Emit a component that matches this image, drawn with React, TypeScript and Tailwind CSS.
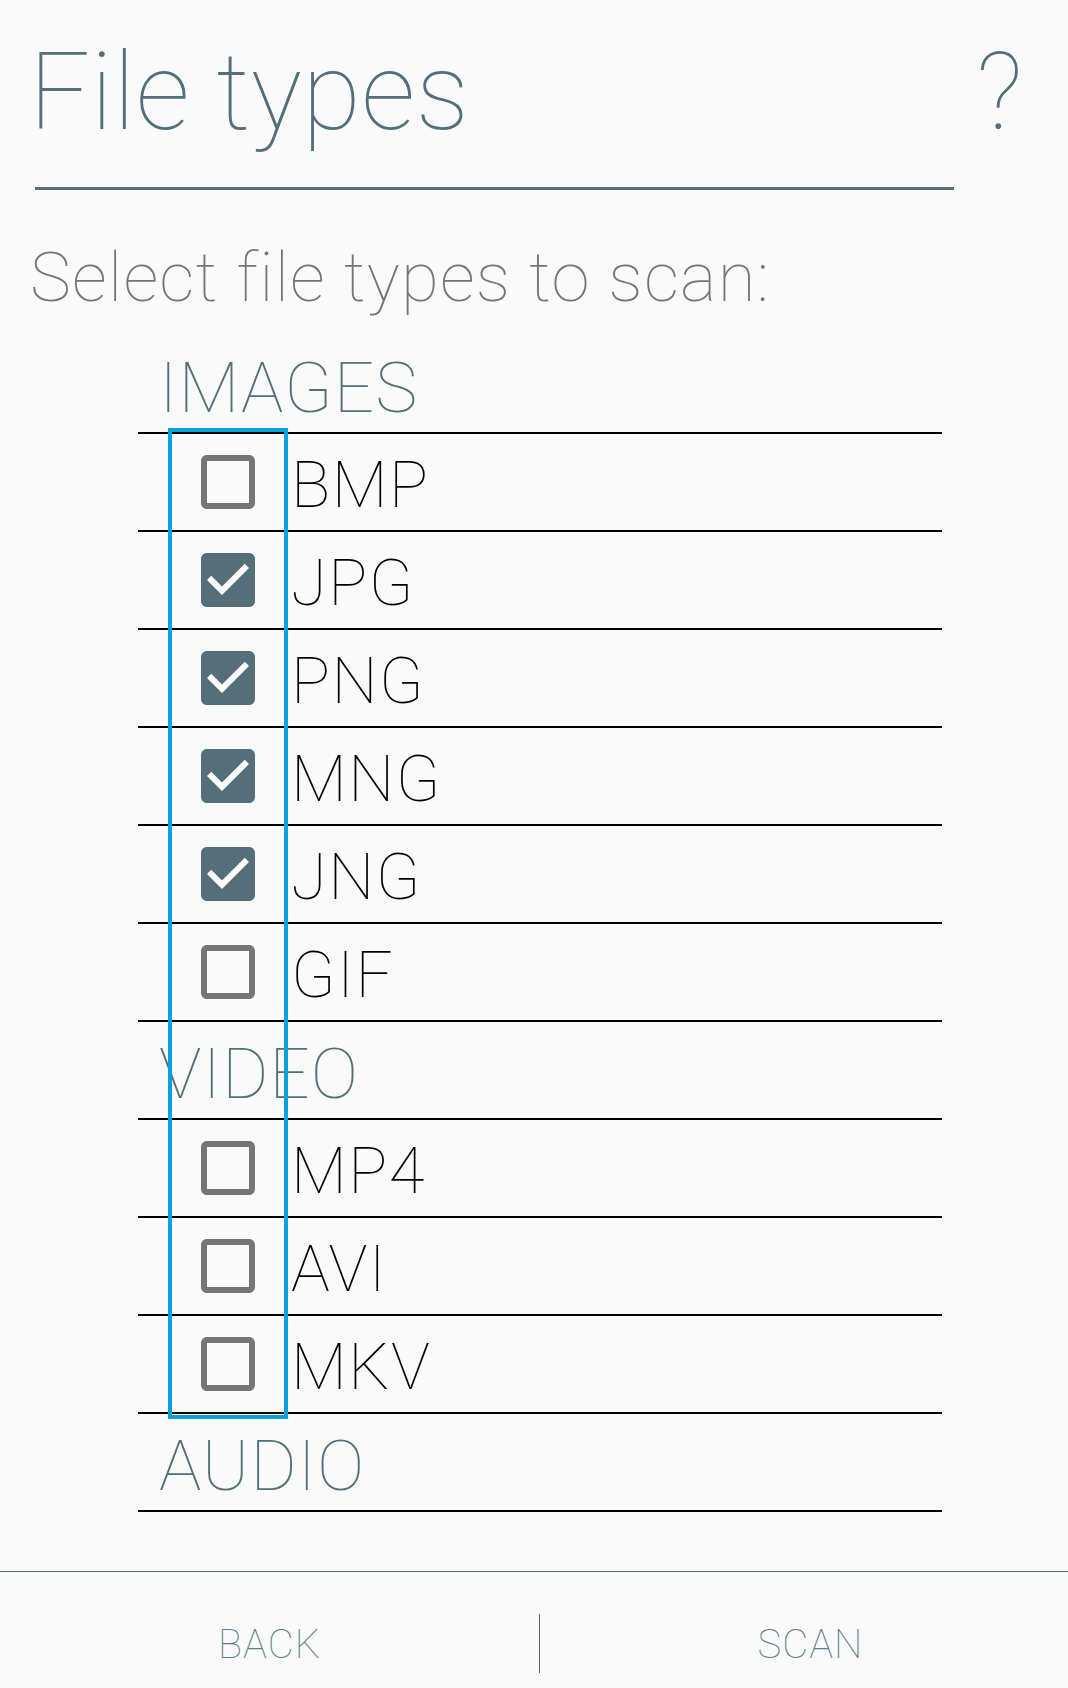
import React from "react";

const font = { fontFamily: "Roboto, 'Noto Sans', sans-serif" };

function Box({ checked }: { checked: boolean }) {
  if (checked) {
    return (
      <svg width="54" height="54" viewBox="3 3 18 18" className="shrink-0">
        <path
          fill="#546e7a"
          d="M19 3H5c-1.11 0-2 .9-2 2v14c0 1.1.89 2 2 2h14c1.11 0 2-.9 2-2V5c0-1.1-.89-2-2-2z"
        />
        <path fill="#ffffff" d="M10 17l-5-5 1.41-1.41L10 14.17l7.59-7.59L19 8l-9 9z" />
      </svg>
    );
  }
  return (
    <svg width="54" height="54" viewBox="3 3 18 18" className="shrink-0">
      <path
        fill="#757575"
        d="M19 5v14H5V5h14m0-2H5c-1.1 0-2 .9-2 2v14c0 1.1.9 2 2 2h14c1.1 0 2-.9 2-2V5c0-1.1-.9-2-2-2z"
      />
    </svg>
  );
}

function Header({ label }: { label: string }) {
  return (
    <div className="flex h-[98px] items-center border-b-2 border-black pl-[21px]">
      <span className="mt-[6px] text-[71px] font-thin leading-none tracking-[1px] text-[#546e7a]">{label}</span>
    </div>
  );
}

function Row({ label, checked }: { label: string; checked: boolean }) {
  return (
    <div className="flex h-[98px] items-center border-b-2 border-black pl-[63px]">
      <Box checked={checked} />
      <span className="ml-[36px] mt-[6px] text-[65px] font-thin leading-none tracking-[1.5px] text-black">{label}</span>
    </div>
  );
}

export default function App() {
  return (
    <div className="flex h-[1688px] w-full flex-col bg-[#fafafa]" style={font}>
      <div className="flex items-start pl-[35px] pt-[29px]">
        <div className="w-[919px] border-b-[3px] border-[#546e7a] pb-[30px]">
          <div className="-ml-[6px] text-[107px] font-thin leading-[128px] tracking-[0.5px] text-[#546e7a]">File types</div>
        </div>
        <div className="ml-[22px] text-[107px] font-thin leading-[128px] text-[#546e7a]">?</div>
      </div>

      <div className="mt-[48px] pl-[30px] text-[69px] font-thin leading-[80px] tracking-[1.2px] text-[#757575]">
        Select file types to scan:
      </div>

      <div className="relative ml-[138px] mt-[18px] w-[804px]">
        <Header label="IMAGES" />
        <Row label="BMP" checked={false} />
        <Row label="JPG" checked={true} />
        <Row label="PNG" checked={true} />
        <Row label="MNG" checked={true} />
        <Row label="JNG" checked={true} />
        <Row label="GIF" checked={false} />
        <Header label="VIDEO" />
        <Row label="MP4" checked={false} />
        <Row label="AVI" checked={false} />
        <Row label="MKV" checked={false} />
        <Header label="AUDIO" />
        <div className="pointer-events-none absolute left-[30px] top-[92px] h-[991px] w-[120px] border-4 border-[#0ea0dc]" />
      </div>

      <div className="mt-auto flex h-[117px] items-start border-t border-[#546e7a] pt-[42px]">
        <div className="flex w-[539px] justify-center pt-[11px]">
          <span className="text-[40px] font-thin leading-none tracking-[1px] text-[#607d8b]">BACK</span>
        </div>
        <div className="h-[59px] w-px bg-[#546e7a]" />
        <div className="flex flex-1 justify-center pl-[13px] pt-[11px]">
          <span className="text-[40px] font-thin leading-none tracking-[1px] text-[#607d8b]">SCAN</span>
        </div>
      </div>
    </div>
  );
}
